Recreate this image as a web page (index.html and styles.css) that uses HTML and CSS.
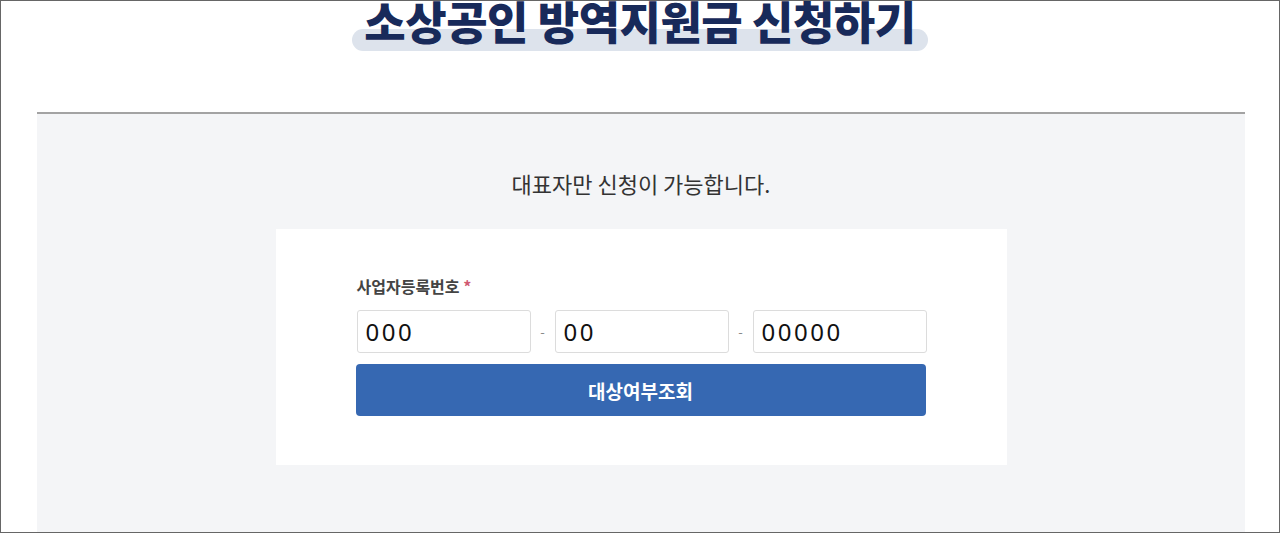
FILE: index.html
```html
<!DOCTYPE html>
<html>
<head>
    <title>소상공인 방역지원금 신청하기</title>
    <link rel="stylesheet" href="styles.css">
</head>
<body>
    <div class="frame">
        <div class="header">
            <h1 class="title"><span class="title-mark">소상공인 방역지원금 신청하기</span></h1>
        </div>

        <div class="panel">
            <p class="notice">대표자만 신청이 가능합니다.</p>

            <div class="card">
                <form id="bizForm">
                    <label class="field-label">사업자등록번호 <span class="req">*</span></label>
                    <div class="biz-row">
                        <input type="text" class="biz-input" value="000" maxlength="3">
                        <span class="dash">-</span>
                        <input type="text" class="biz-input" value="00" maxlength="2">
                        <span class="dash">-</span>
                        <input type="text" class="biz-input" value="00000" maxlength="5">
                    </div>
                    <button type="submit" class="check-btn">대상여부조회</button>
                </form>
            </div>
        </div>
    </div>
</body>
</html>
```

FILE: styles.css
```css
body { margin: 0; font-family: "Noto Sans CJK KR", "Noto Sans", sans-serif; background: #fff; }
.frame { height: 533px; box-sizing: border-box; border: 1px solid #666; overflow: hidden; }

.header { height: 111px; text-align: center; display: flow-root; }
.title { margin: -8px 0 0; font-size: 45px; font-weight: 900; line-height: 56px; color: #182a5a; letter-spacing: -0.5px; }
.title-mark { display: inline-block; position: relative; z-index: 0; padding: 0 12px; }
.title-mark::after { content: ""; position: absolute; left: 0; right: 0; top: 36px; height: 22px; background: #dde3ec; border-radius: 11px; z-index: -1; }

.panel { width: 1208px; margin-left: 36px; height: 420px; border-top: 2px solid #a3a3a3; background: #f4f5f7; padding-top: 55px; box-sizing: border-box; }
.notice { margin: 0 0 32px; text-align: center; font-size: 22px; line-height: 28px; color: #333; }

.card { width: 731px; margin: 0 auto; background: #fff; padding: 47px 80px 49px 81px; box-sizing: border-box; }
.field-label { display: block; font-size: 16px; line-height: 20px; font-weight: bold; color: #444; margin-bottom: 14px; }
.req { color: #d05a72; }

.biz-row { display: flex; align-items: center; }
.biz-input { width: 174px; height: 43px; box-sizing: border-box; border: 1px solid #dcdcdc; border-radius: 3px; padding: 0 8px; font-family: "Noto Sans", sans-serif; font-size: 24px; color: #111; letter-spacing: 2.5px; outline: none; }
.dash { width: 24px; text-align: center; color: #888; font-size: 13px; }

.check-btn { display: block; width: 570px; height: 52px; margin-top: 11px; margin-left: -1px; border: none; border-radius: 4px; background: #3668b2; color: #fff; font-family: "Noto Sans CJK KR", sans-serif; font-size: 19px; font-weight: bold; cursor: pointer; }
```
